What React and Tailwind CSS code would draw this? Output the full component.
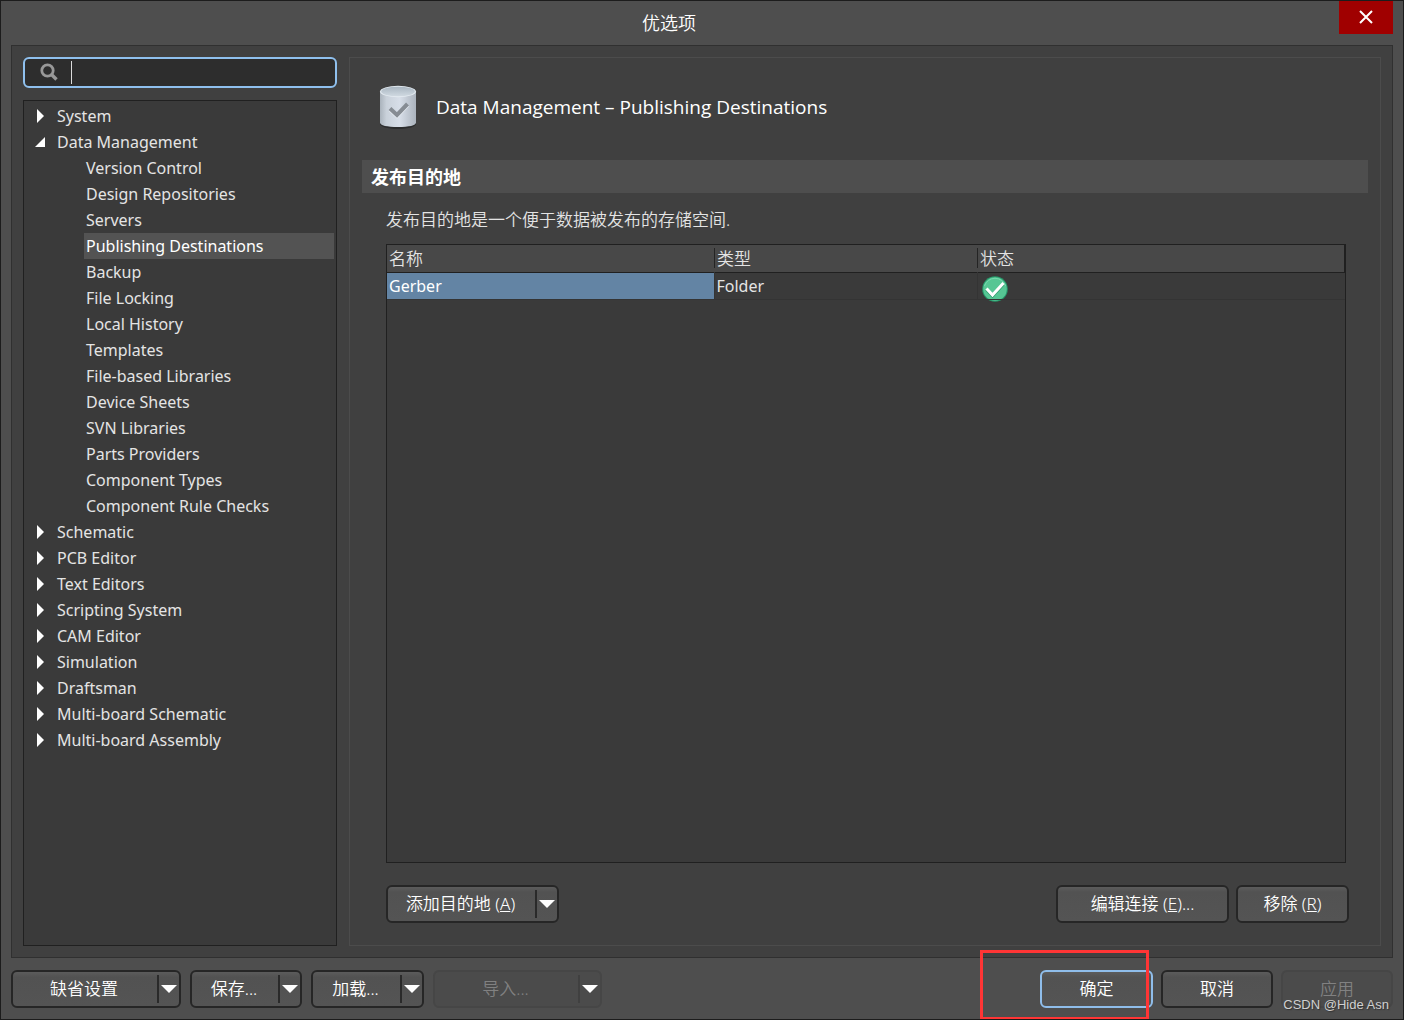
import { useState } from 'react';
import clsx from 'clsx';

const TREE = [
  { label: 'System' },
  {
    label: 'Data Management',
    children: [
      'Version Control',
      'Design Repositories',
      'Servers',
      'Publishing Destinations',
      'Backup',
      'File Locking',
      'Local History',
      'Templates',
      'File-based Libraries',
      'Device Sheets',
      'SVN Libraries',
      'Parts Providers',
      'Component Types',
      'Component Rule Checks',
    ],
  },
  { label: 'Schematic' },
  { label: 'PCB Editor' },
  { label: 'Text Editors' },
  { label: 'Scripting System' },
  { label: 'CAM Editor' },
  { label: 'Simulation' },
  { label: 'Draftsman' },
  { label: 'Multi-board Schematic' },
  { label: 'Multi-board Assembly' },
];

const DESTINATIONS = [{ name: 'Gerber', type: 'Folder' }];

const BTN = 'h-[38px] rounded-md border-2 text-center text-[17px] leading-6 font-[350]';
const BTN_NORMAL = 'border-[#262626] bg-linear-to-b from-[#5c5c5c] via-[#525252] via-15% to-[#545454] text-white';
const BTN_DISABLED = 'border-[#464646] bg-[#4b4b4b] text-[#818181]';
const BTN_DEFAULT = 'border-[#8fbdea] bg-linear-to-b from-[#5c5c5c] via-[#525252] via-15% to-[#545454] text-white';

function Button({ children, className, variant = BTN_NORMAL, ...rest }) {
  return (
    <button type="button" className={clsx(BTN, variant, className)} {...rest}>
      {children}
    </button>
  );
}

function SplitButton({ children, label, className, disabled }) {
  return (
    <div className={clsx(BTN, disabled ? BTN_DISABLED : BTN_NORMAL, 'flex items-center', className)}>
      <button type="button" disabled={disabled} className="h-full flex-1 pr-[2px]">
        {children}
      </button>
      <button
        type="button"
        aria-label={label}
        className={clsx('flex h-7 items-center border-l-2 px-[2px]', disabled ? 'border-[#404040]' : 'border-[#2a2a2a]')}
      >
        <svg width="16" height="8" viewBox="0 0 16 8" fill="#fff">
          <path d="M0 0h16L8 8z" />
        </svg>
      </button>
    </div>
  );
}

function DatabaseIcon() {
  return (
    <svg width="40" height="46" viewBox="0 0 40 46" fill="none">
      <defs>
        <linearGradient id="body" x1="0" x2="1" y1="0" y2="0">
          <stop offset="0" stopColor="#aab3bc" />
          <stop offset="0.18" stopColor="#c9d1da" />
          <stop offset="0.55" stopColor="#d7dee8" />
          <stop offset="1" stopColor="#abb3bd" />
        </linearGradient>
        <linearGradient id="lid" x1="0" x2="0" y1="0" y2="1">
          <stop offset="0" stopColor="#a9b6c1" />
          <stop offset="1" stopColor="#d0d9e1" />
        </linearGradient>
      </defs>
      <path d="M2 8v32c0 2.500 7 5 18 5s18-2.500 18-5V8z" fill="#2c2d2e" />
      <path d="M2 7.500v31c0 3 7 4.500 18 4.500s18-1.500 18-4.500v-31z" fill="url(#body)" />
      <ellipse cx="20" cy="7.500" rx="18" ry="5.800" fill="#e3eaf0" />
      <ellipse cx="20" cy="7.500" rx="16.800" ry="4.800" fill="url(#lid)" />
      <path d="M12 25.500l7 6.500L29.500 21" stroke="#e6ebf1" strokeWidth="4" />
      <path d="M12 24.500l7 6.500L29.500 20" stroke="#868c93" strokeWidth="4" />
    </svg>
  );
}

function StatusOkIcon() {
  return (
    <svg width="26" height="26" viewBox="0 0 26 26" fill="none" role="img" aria-label="OK">
      <circle cx="13" cy="13" r="12.800" fill="#27976a" />
      <circle cx="13" cy="13" r="11.800" fill="#56c694" />
      <path d="M2.500 10a11 11 0 0 1 21 0" stroke="#77d9ae" />
      <path d="M4.500 13.500l6 6.500L21.500 8" stroke="#2b9a6b" strokeWidth="3" />
      <path d="M4.500 12.500l6 6.500L21.500 7" stroke="#fff" strokeWidth="3" />
      <path d="M3 23.500h20" stroke="#343434" />
    </svg>
  );
}

function Tree({ selected, onSelect }) {
  const [open, setOpen] = useState('Data Management');

  return (
    <ul className="flex-1 border border-[#202020] bg-[#3a3a3a] py-[2px] pr-[2px] text-[#e4e4e4]">
      {TREE.map(node => {
        const expanded = open === node.label && node.children;
        return (
          <li key={node.label}>
            <button
              type="button"
              className="flex h-[26px] w-full items-center pl-[11px] text-left"
              onClick={() => setOpen(expanded ? '' : node.label)}
            >
              <svg width="10" height="14" viewBox="0 0 10 14" fill="#fff" className="mr-3">
                {expanded ? <path d="M10 2v10H0z" /> : <path d="M2 0l7 7-7 7z" />}
              </svg>
              {node.label}
            </button>
            {expanded && (
              <ul className="pl-15">
                {node.children.map(child => (
                  <li key={child}>
                    <button
                      type="button"
                      className={clsx('block h-[26px] w-full pl-[2px] text-left', child === selected && 'bg-[#535353] text-white')}
                      onClick={() => onSelect(child)}
                    >
                      {child}
                    </button>
                  </li>
                ))}
              </ul>
            )}
          </li>
        );
      })}
    </ul>
  );
}

function DestinationsTable() {
  return (
    <div className="mr-[22px] flex-1 border border-[#202020] bg-[#3a3a3a]">
      <table className="w-full table-fixed border-collapse text-left text-[#e4e4e4]">
        <colgroup>
          <col className="w-[327px]" />
          <col className="w-[263px]" />
          <col />
        </colgroup>
        <thead className="border-r border-b border-[#202020] bg-[#484848] text-[17px]">
          <tr className="h-[27px]">
            {['名称', '类型', '状态'].map((title, i) => (
              <th key={title} className="p-0 font-[350]">
                <div className={clsx('h-5 pl-[2px] leading-[22px]', i > 0 && 'border-l border-[#242424]')}>{title}</div>
              </th>
            ))}
          </tr>
        </thead>
        <tbody>
          {DESTINATIONS.map(d => (
            <tr key={d.name} className="h-[27px] border-b border-[#343434]">
              <td className="bg-[#6384a4] p-0 pl-[2px] text-white">{d.name}</td>
              <td className="border-l border-[#343434] p-0 pl-[2px]">{d.type}</td>
              <td className="border-l border-[#343434] p-0 pl-1">
                <div className="flex h-5">
                  <StatusOkIcon />
                </div>
              </td>
            </tr>
          ))}
        </tbody>
      </table>
    </div>
  );
}

export default function App() {
  const [selected, setSelected] = useState('Publishing Destinations');
  const [query, setQuery] = useState('');

  return (
    <div className="relative flex min-h-screen flex-col overflow-hidden border border-[#1c1c1c] bg-[#4e4e4e] px-[10px] font-['Noto_Sans','Noto_Sans_CJK_SC',sans-serif] text-[16px] leading-[26px]">
      <header className="flex h-11 items-start">
        <h1 className="flex-1 self-center pr-3 text-center text-[18px] font-[350] text-white">优选项</h1>
        <button type="button" aria-label="Close" className="flex h-[33px] w-[54px] items-center justify-center bg-[#a00000] pb-[2px]">
          <svg width="14" height="14" viewBox="0 0 14 14" stroke="#fff" strokeWidth="2">
            <path d="M1 1l12 12M13 1L1 13" />
          </svg>
        </button>
      </header>

      <main className="flex flex-1 gap-3 border border-[#303030] bg-[#404040] p-[11px]">
        <aside className="flex w-[314px] flex-col gap-3">
          <div className="flex h-[31px] items-center rounded-md border-2 border-[#8fc0ee] bg-[#2d2d2d] pb-px pl-[15px]">
            <svg width="18" height="18" viewBox="0 0 18 18" fill="none" stroke="#989898">
              <circle cx="7.500" cy="7.500" r="5.700" strokeWidth="2.800" />
              <path d="M11.500 11.500l5 5" strokeWidth="3.400" />
            </svg>
            {!query && <span className="ml-[13px] h-[23px] w-px bg-[#dcdcdc]" />}
            <input
              type="text"
              aria-label="Search"
              value={query}
              onChange={e => setQuery(e.target.value)}
              className="min-w-0 flex-1 bg-transparent text-white outline-none"
            />
          </div>
          <Tree selected={selected} onSelect={setSelected} />
        </aside>

        <section className="flex flex-1 flex-col border border-[#4c4c4c] px-3 pb-[22px]">
          <div className="flex h-[102px] items-center pb-1 pl-4">
            <DatabaseIcon />
            <h2 className="ml-[18px] font-['Open_Sans',sans-serif] text-[19px] text-white">Data Management – {selected}</h2>
          </div>
          <h3 className="h-[33px] bg-[#4e4e4e] pl-[9px] text-[18px] leading-[35px] font-bold text-white">发布目的地</h3>
          <div className="flex flex-1 flex-col pl-6">
            <p className="pt-[14px] pb-3 text-[17px] leading-[25px] font-[350] text-[#e4e4e4]">发布目的地是一个便于数据被发布的存储空间.</p>
            <DestinationsTable />
            <div className="mt-[22px] mr-[19px] flex gap-[7px]">
              <SplitButton label="添加目的地" className="mr-auto w-[173px]">
                添加目的地 (<u>A</u>)
              </SplitButton>
              <Button className="w-[173px]">
                编辑连接 (<u>E</u>)...
              </Button>
              <Button className="w-[113px]">
                移除 (<u>R</u>)
              </Button>
            </div>
          </div>
        </section>
      </main>

      <footer className="flex gap-[9px] pt-3 pb-[11px]">
        <SplitButton label="缺省设置选项" className="w-[170px]">缺省设置</SplitButton>
        <SplitButton label="保存选项" className="w-[112px]">保存...</SplitButton>
        <SplitButton label="加载选项" className="w-[113px]">加载...</SplitButton>
        <SplitButton label="导入选项" className="w-[169px]" disabled>导入...</SplitButton>
        <div className="ml-auto flex gap-2">
          <div className="relative">
            <Button variant={BTN_DEFAULT} className="w-[113px]">确定</Button>
            <div className="pointer-events-none absolute -top-5 -left-15 h-[70px] w-[169px] border-3 border-[#ff3535]" />
          </div>
          <Button className="w-[112px]">取消</Button>
          <Button variant={BTN_DISABLED} className="w-[112px]" disabled>应用</Button>
        </div>
      </footer>
      <span className="pointer-events-none absolute right-[14px] bottom-1 font-['Liberation_Sans',sans-serif] text-[13px] leading-5 text-[#d0d0d0] [text-shadow:1px_1px_1px_#333]">
        CSDN @Hide Asn
      </span>
    </div>
  );
}
